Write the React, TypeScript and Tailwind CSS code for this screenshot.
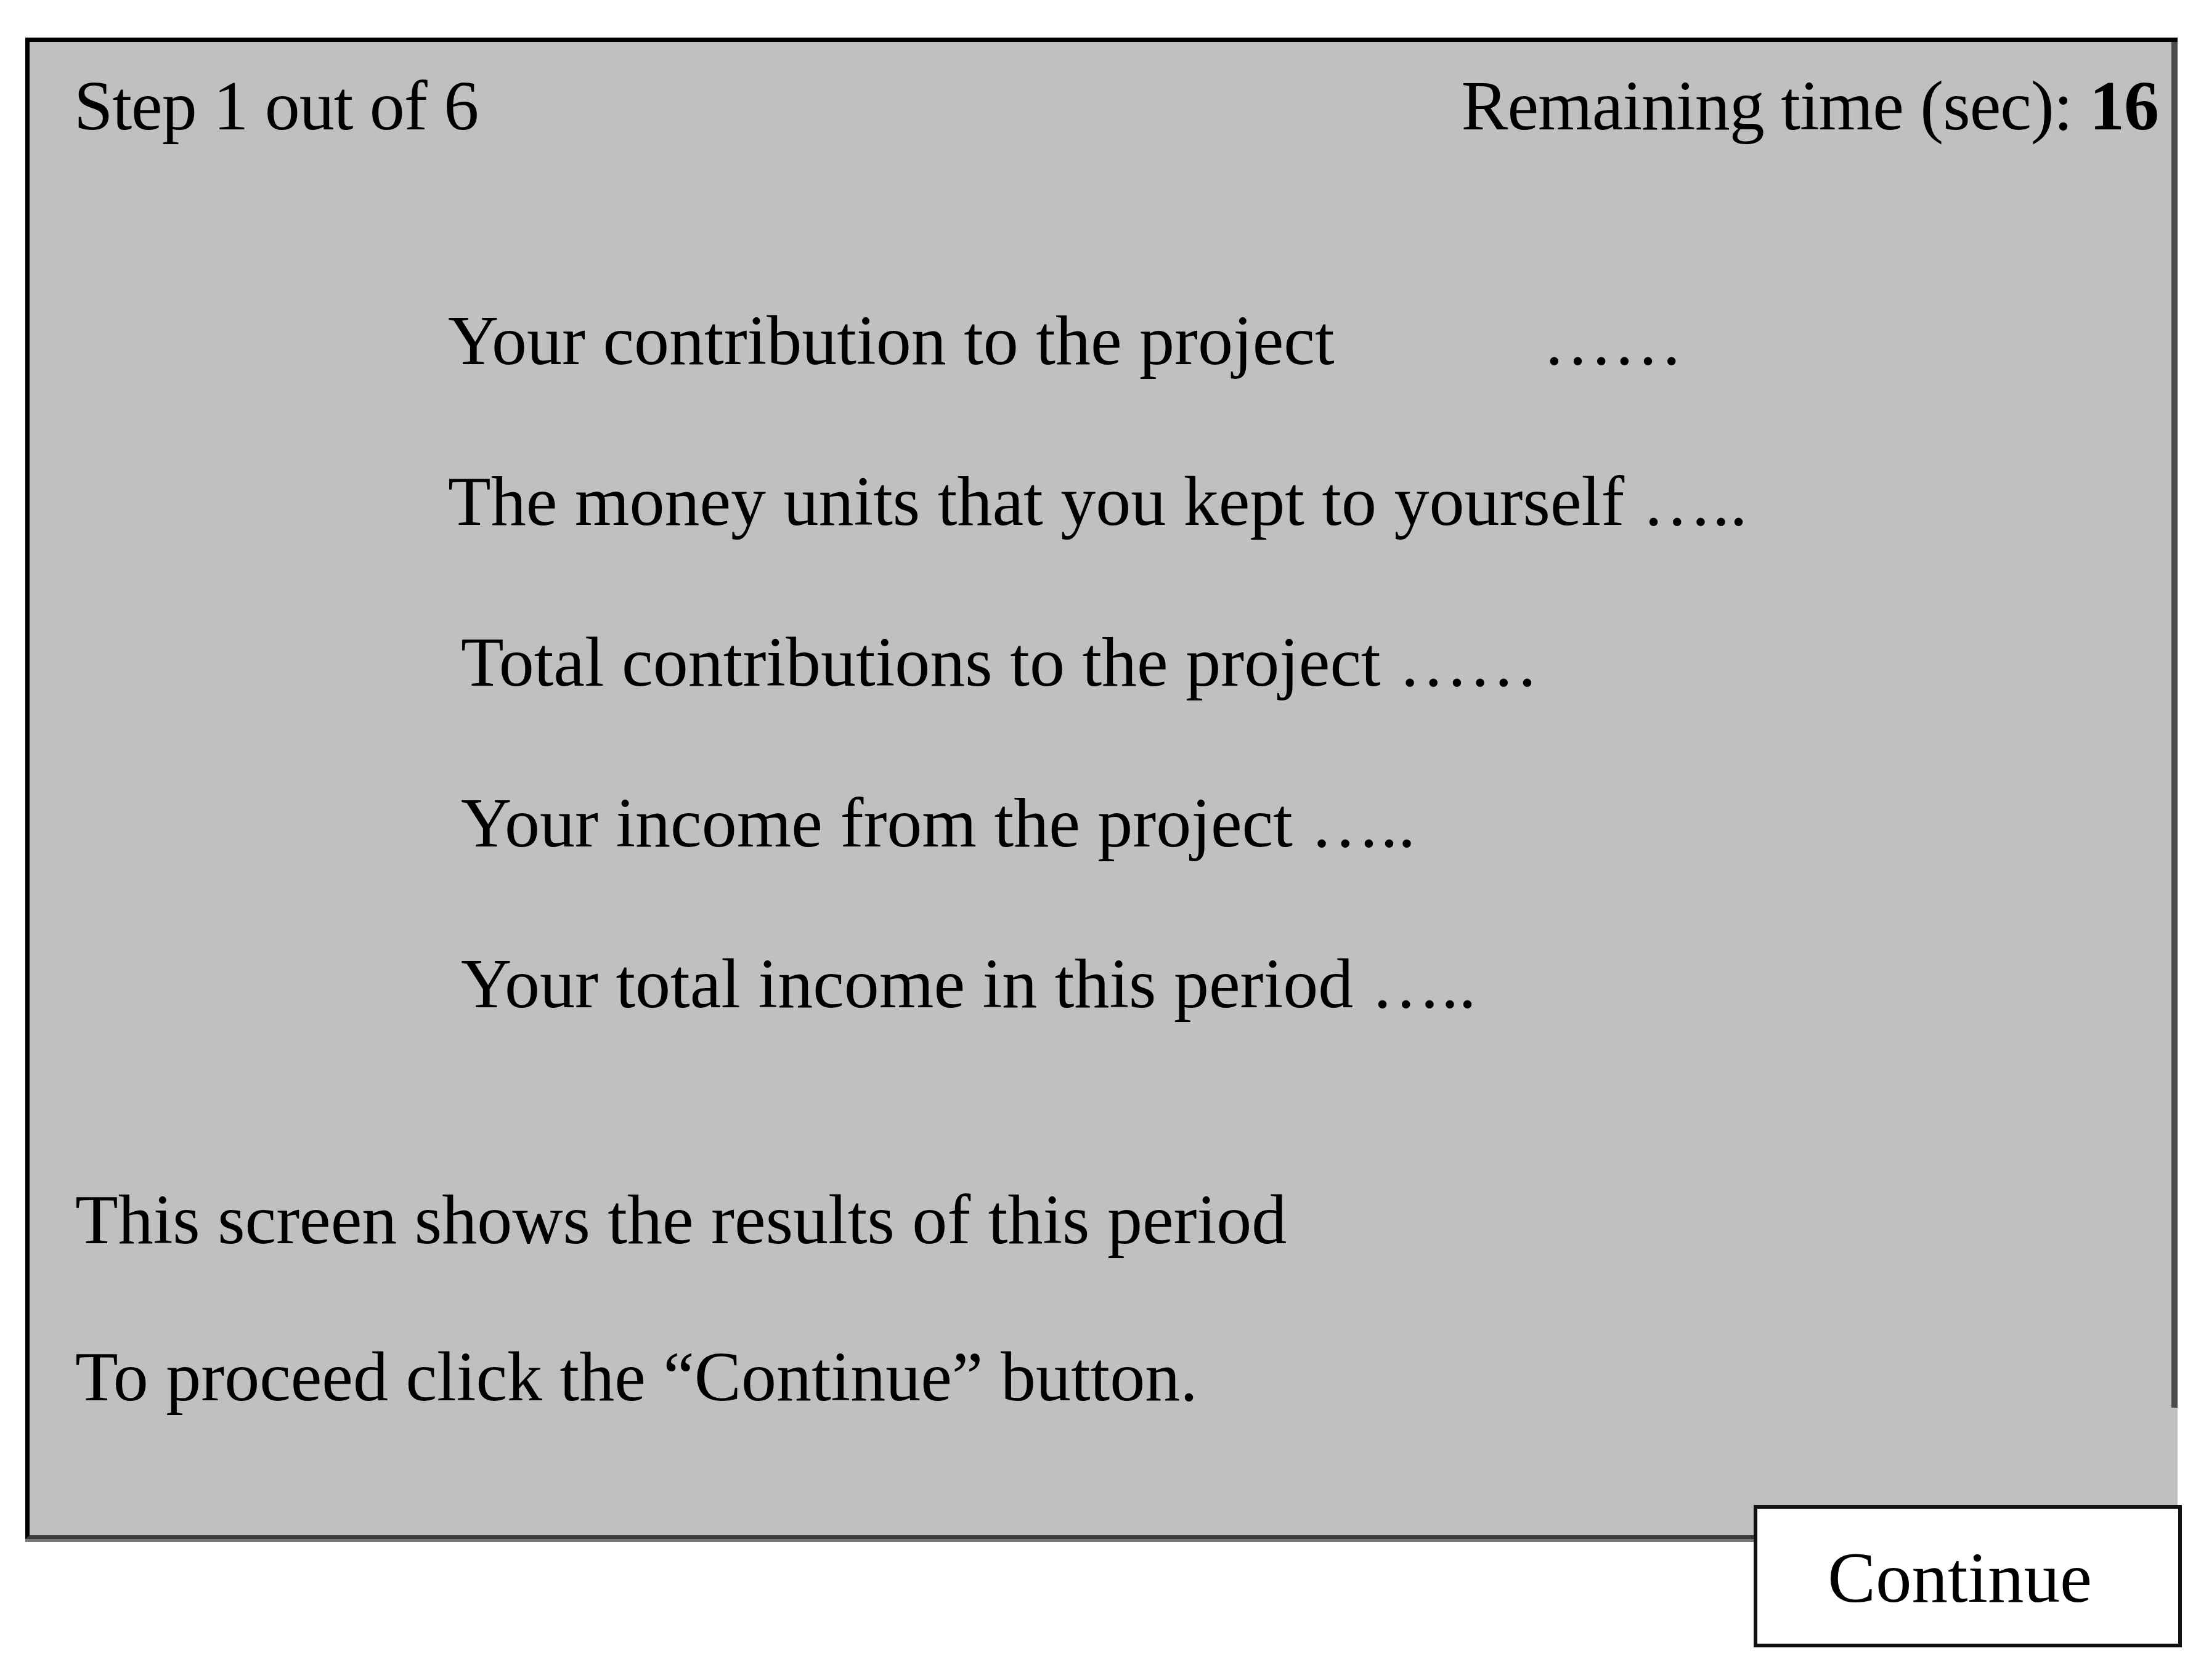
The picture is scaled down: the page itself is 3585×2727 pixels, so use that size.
export default function App() {
  return (
    <div className="w-[3585px] h-[2727px] bg-white pl-[41px] pt-[61px] font-['Liberation_Serif',serif] text-black text-[114px] leading-[114px]">
      <div className="w-[3493px] h-[2437px] flex bg-[#c0c0c0] border-t-[7px] border-l-[7px] border-b-[6px] border-t-black border-l-black border-b-[#3a3a3a] shadow-[0_5px_0_#777777]">
        <div className="flex-1 flex flex-col">
          <div className="flex justify-between pt-[47px] pl-[72px] pr-[21px] tracking-[-1px]">
            <span>Step 1 out of 6</span>
            <span>
              Remaining time (sec): <b className="font-bold">16</b>
            </span>
          </div>

          <div className="mt-[267px] pl-[679px] flex flex-col gap-[147px]">
            <div className="flex">
              <span>Your contribution to the project</span>
              <span className="ml-[338px]">……</span>
            </div>
            <div>The money units that you kept to yourself …..</div>
            <div className="pl-[21px]">Total contributions to the project ……</div>
            <div className="pl-[21px]">Your income from the project …..</div>
            <div className="pl-[21px]">Your total income in this period …..</div>
          </div>

          <div className="mt-[269px] pl-[74px] flex flex-col gap-[141px]">
            <div>This screen shows the results of this period</div>
            <div>To proceed click the “Continue” button.</div>
          </div>
        </div>
        <div className="w-[10px] flex flex-col">
          <div className="h-[2217px] bg-[#4b4b4b]" />
        </div>
      </div>

      <div className="w-[3500px] flex justify-end -mt-[55px]">
        <button className="w-[695px] h-[231px] bg-white border-[6px] border-[#111111] flex items-center justify-center pt-[4px] pr-[26px] text-[117px] leading-[117px] font-['Liberation_Serif',serif]">
          Continue
        </button>
      </div>
    </div>
  );
}
